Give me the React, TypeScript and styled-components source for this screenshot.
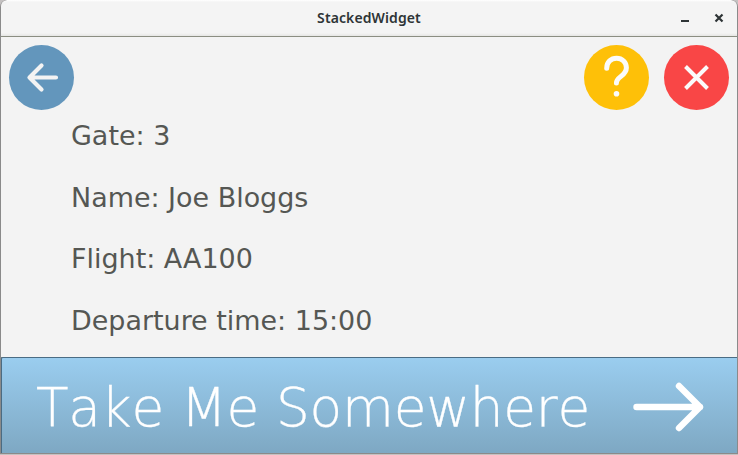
import React from "react";
import styled, { createGlobalStyle } from "styled-components";

const GlobalStyle = createGlobalStyle`
  * { box-sizing: border-box; }
  body { margin: 0; background: #c4c1c1; overflow: hidden; }
`;

const Window = styled.main`
  display: flex;
  flex-direction: column;
  width: 738px;
  height: 454px;
  padding: 0 1px 1px;
  background: #8a8a8a;
  border-radius: 7px 7px 0 0;
  overflow: hidden;
`;

const TitleBar = styled.header`
  display: grid;
  grid-template-columns: 1fr auto 1fr;
  align-items: center;
  flex: none;
  height: 37px;
  background: linear-gradient(#fff 0, #f4f4f4 2px, #f4f4f4 33px, #e6e6e4 36px);
  border-bottom: 1px solid #8b8e82;
  border-radius: 6px 6px 0 0;
`;

const Title = styled.h1`
  grid-column: 2;
  margin: 0;
  font: 600 14px/20px "Noto Sans", sans-serif;
  letter-spacing: 0.1px;
  color: #2e3436;
`;

const WindowControls = styled.div`
  display: flex;
  justify-content: flex-end;
  gap: 23px;
  padding-right: 13px;
`;

const WindowButton = styled.button`
  display: flex;
  width: 10px;
  height: 10px;
  padding: 0;
  border: 0;
  background: none;
  color: #2e3436;
`;

const Page = styled.section`
  display: flex;
  flex-direction: column;
  flex: none;
  height: 320px;
  padding: 8px 8px 0;
  background: #f3f3f3;
`;

const Toolbar = styled.nav`
  display: flex;
  gap: 15px;
  height: 65px;
`;

const RoundButton = styled.button<{ $color: string; $end?: boolean }>`
  display: flex;
  width: 65px;
  height: 65px;
  padding: 0;
  margin-left: ${(p) => (p.$end ? "auto" : "0")};
  border: 0;
  border-radius: 50%;
  background: ${(p) => p.$color};
  color: #f3f3f3;
`;

const Details = styled.div`
  display: grid;
  grid-auto-rows: 61.6px;
  margin-top: -5px;
  padding-left: 62px;
`;

const Detail = styled.p`
  margin: 0;
  font: 26.95px/61.6px "DejaVu Sans", sans-serif;
  color: #555753;
  white-space: nowrap;
`;

const ActionButton = styled.button`
  display: flex;
  align-items: center;
  flex: none;
  height: 96px;
  padding: 3px 32px 0 34px;
  border: solid #4a6c84;
  border-width: 1px 0 0 1px;
  border-radius: 2px 0 0 0;
  background: linear-gradient(#9acdef, #7ea8c3);
  color: #fff;
  justify-content: space-between;
`;

const ActionLabel = styled.span`
  padding-top: 2px;
  font: 200 53.33px/62px "DejaVu Sans", sans-serif;
  font-kerning: none;
  letter-spacing: -0.22px;
  -webkit-text-stroke: 0.3px #fff;
  white-space: nowrap;
`;

const details = ["Gate: 3", "Name: Joe Bloggs", "Flight: AA100", "Departure time: 15:00"];

export default function App() {
  return (
    <>
      <GlobalStyle />
      <Window>
        <TitleBar>
          <Title>StackedWidget</Title>
          <WindowControls>
            <WindowButton aria-label="Minimize">
              <svg width="10" height="10" viewBox="0 0 10 10">
                <path d="M0 8H8" stroke="currentColor" strokeWidth="2" />
              </svg>
            </WindowButton>
            <WindowButton aria-label="Close window">
              <svg width="10" height="10" viewBox="0 0 10 10">
                <path d="M1.5 1.5L8.5 8.5M8.5 1.5L1.5 8.5" stroke="currentColor" strokeWidth="2.2" />
              </svg>
            </WindowButton>
          </WindowControls>
        </TitleBar>
        <Page>
          <Toolbar>
            <RoundButton $color="#6396bc" aria-label="Back">
              <svg width="65" height="65" fill="none" stroke="currentColor" strokeWidth="4.2" strokeLinecap="round" strokeLinejoin="round">
                <path d="M47 32.5H20.5M32.5 20.5L20.5 32.5L32.5 44.5" />
              </svg>
            </RoundButton>
            <RoundButton $color="#fec008" $end aria-label="Help">
              <svg width="65" height="65" fill="none" stroke="#fbfbfb" strokeWidth="5" strokeLinecap="round" strokeLinejoin="round">
                <path d="M22.7 23.2C22.7 17 27 13.2 32.6 13.2C38.2 13.2 42.4 17.4 42.4 22.7C42.4 31 32.4 31.5 32.4 38" />
                <circle cx="32.5" cy="48.7" r="2.8" fill="#fbfbfb" stroke="none" />
              </svg>
            </RoundButton>
            <RoundButton $color="#f94646" aria-label="Cancel">
              <svg width="65" height="65" fill="none" stroke="#fbfbfb" strokeWidth="4">
                <path d="M21.5 21.5L43.5 43.5M43.5 21.5L21.5 43.5" />
              </svg>
            </RoundButton>
          </Toolbar>
          <Details>
            {details.map((text) => (
              <Detail key={text}>{text}</Detail>
            ))}
          </Details>
        </Page>
        <ActionButton>
          <ActionLabel>Take Me Somewhere</ActionLabel>
          <svg width="72" height="50" viewBox="0 0 72 50" fill="none" stroke="currentColor" strokeWidth="6.4" strokeLinecap="round" strokeLinejoin="round">
            <path d="M3.5 25H67M46 4L67 25L46 46" />
          </svg>
        </ActionButton>
      </Window>
    </>
  );
}
